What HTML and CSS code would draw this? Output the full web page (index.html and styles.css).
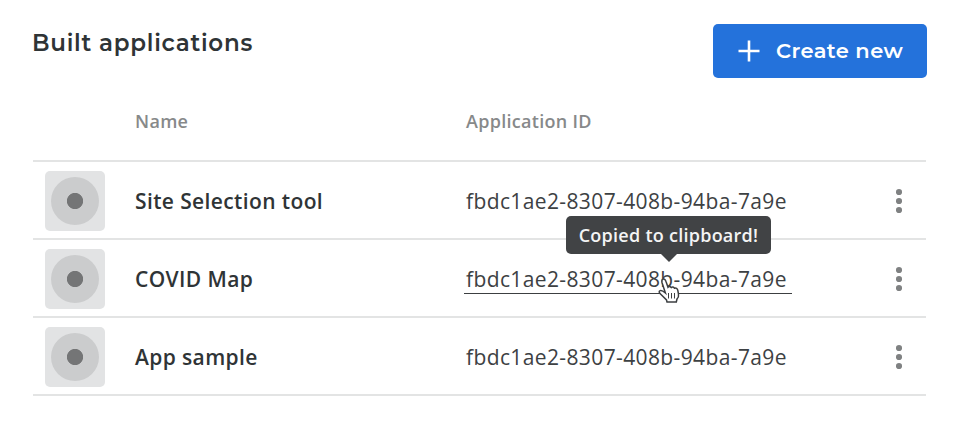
FILE: index.html
```
<!DOCTYPE html>
<html lang="en"><head><meta charset="utf-8"><title>Built applications</title><link rel="stylesheet" href="styles.css"></head>
<body>
<main class="page">
<header class="header"><h1 class="title">Built applications</h1>
<button class="create"><svg class="plus" viewBox="0 0 22 22"><path d="M11 0.5V21.5M0.5 11H21.5"/></svg><span class="create-label">Create new</span></button></header>
<section class="table">
<div class="row head"><span></span><span class="th">Name</span><span class="th">Application ID</span><span></span></div>
<div class="row"><span class="thumb"><i class="disc"></i></span><span class="name">Site Selection tool</span><span class="id">fbdc1ae2-8307-408b-94ba-7a9e</span><span class="more"><i></i><i></i><i></i></span></div>
<div class="row"><span class="thumb"><i class="disc"></i></span><span class="name">COVID Map</span><span class="id active">fbdc1ae2-8307-408b-94ba-7a9e
<span class="tooltip">Copied to clipboard!</span>
<svg class="cursor" viewBox="0 0 24 27"><path d="M8.400 16L5 5.500Q4.300 2.500 6.300 2Q8 1.500 8.900 4.300L11 10.300Q12.500 8.700 14.200 10.600Q16 9.200 17.500 11.200Q20 10.400 20.800 13.300L21.500 17Q22 20 20 22L19.300 25H10L9.500 23L3.500 17Q1 14.500 3.200 13.600Q5 13 8.400 16Z"/><path class="lines" d="M11.500 16V21.500M14.500 16V21.500M17.500 16V21.500"/></svg></span><span class="more"><i></i><i></i><i></i></span></div>
<div class="row"><span class="thumb"><i class="disc"></i></span><span class="name">App sample</span><span class="id">fbdc1ae2-8307-408b-94ba-7a9e</span><span class="more"><i></i><i></i><i></i></span></div>
</section></main></body></html>
```
FILE: styles.css
```
* { box-sizing: border-box; }
body { margin: 0; background: #fff; color: #2f3436; font-family: "Open Sans", sans-serif; }
.page { padding: 24px 34px 0 33px; }
.header { display: flex; justify-content: space-between; height: 57px; margin-right: -1.4px; }
.title { margin: 3px 0 0 -1px; font: 600 23px/32px Montserrat, "Open Sans", sans-serif; letter-spacing: .75px; white-space: nowrap; }
.create { display: flex; align-items: center; width: 214.4px; height: 54px; padding: 0 25px; gap: 16px; border: 0; border-radius: 5px; background: #2472db; color: #fff; font: 600 21px/30px Montserrat, "Open Sans", sans-serif; letter-spacing: .4px; white-space: nowrap; }
.plus { flex: none; width: 22px; height: 22px; fill: none; stroke: #fff; stroke-width: 2.6; }
.row { display: grid; grid-template-columns: 102px 331px 1fr 54px; align-items: center; height: 78px; border-bottom: 2px solid #e3e4e4; white-space: nowrap; }
.head { height: 81px; }
.th { color: #87898a; font-size: 18px; font-weight: 600; letter-spacing: .3px; }
.thumb { display: grid; place-items: center; width: 60px; height: 60px; margin: 2px 0 0 12.4px; border-radius: 5px; background: #e2e3e4; }
.disc { width: 48px; height: 48px; border-radius: 50%; background: radial-gradient(circle, #747576 7.7px, #cbcccd 8.5px); }
.name { padding-top: 2px; font-size: 21px; font-weight: 600; letter-spacing: .38px; }
.id { position: relative; padding-top: 1px; color: #3d4143; font-size: 21px; letter-spacing: .38px; }
.more { display: grid; justify-items: center; gap: 3px; padding-top: 2px; }
.more i { width: 6.4px; height: 6px; border-radius: 50%; background: #7f8182; }
.active::before { content: ""; position: absolute; left: -2px; top: 29px; width: 328px; height: 1.5px; background: #3c3f41; }
.tooltip { position: absolute; left: 100px; top: -48px; width: 205px; height: 38px; border-radius: 5px; background: #414345; color: #f4f4f4; font-size: 18px; font-weight: 600; line-height: 38px; letter-spacing: .26px; text-align: center; }
.tooltip::after { content: ""; position: absolute; left: 94px; top: 37px; border: 9px solid transparent; border-top-color: #414345; border-bottom: 0; }
.cursor { position: absolute; left: 191px; top: 13.500px; width: 24px; height: 27px; fill: #fff; stroke: #3c3f41; stroke-width: 1.5; }
.lines { stroke-width: 1; }
```
